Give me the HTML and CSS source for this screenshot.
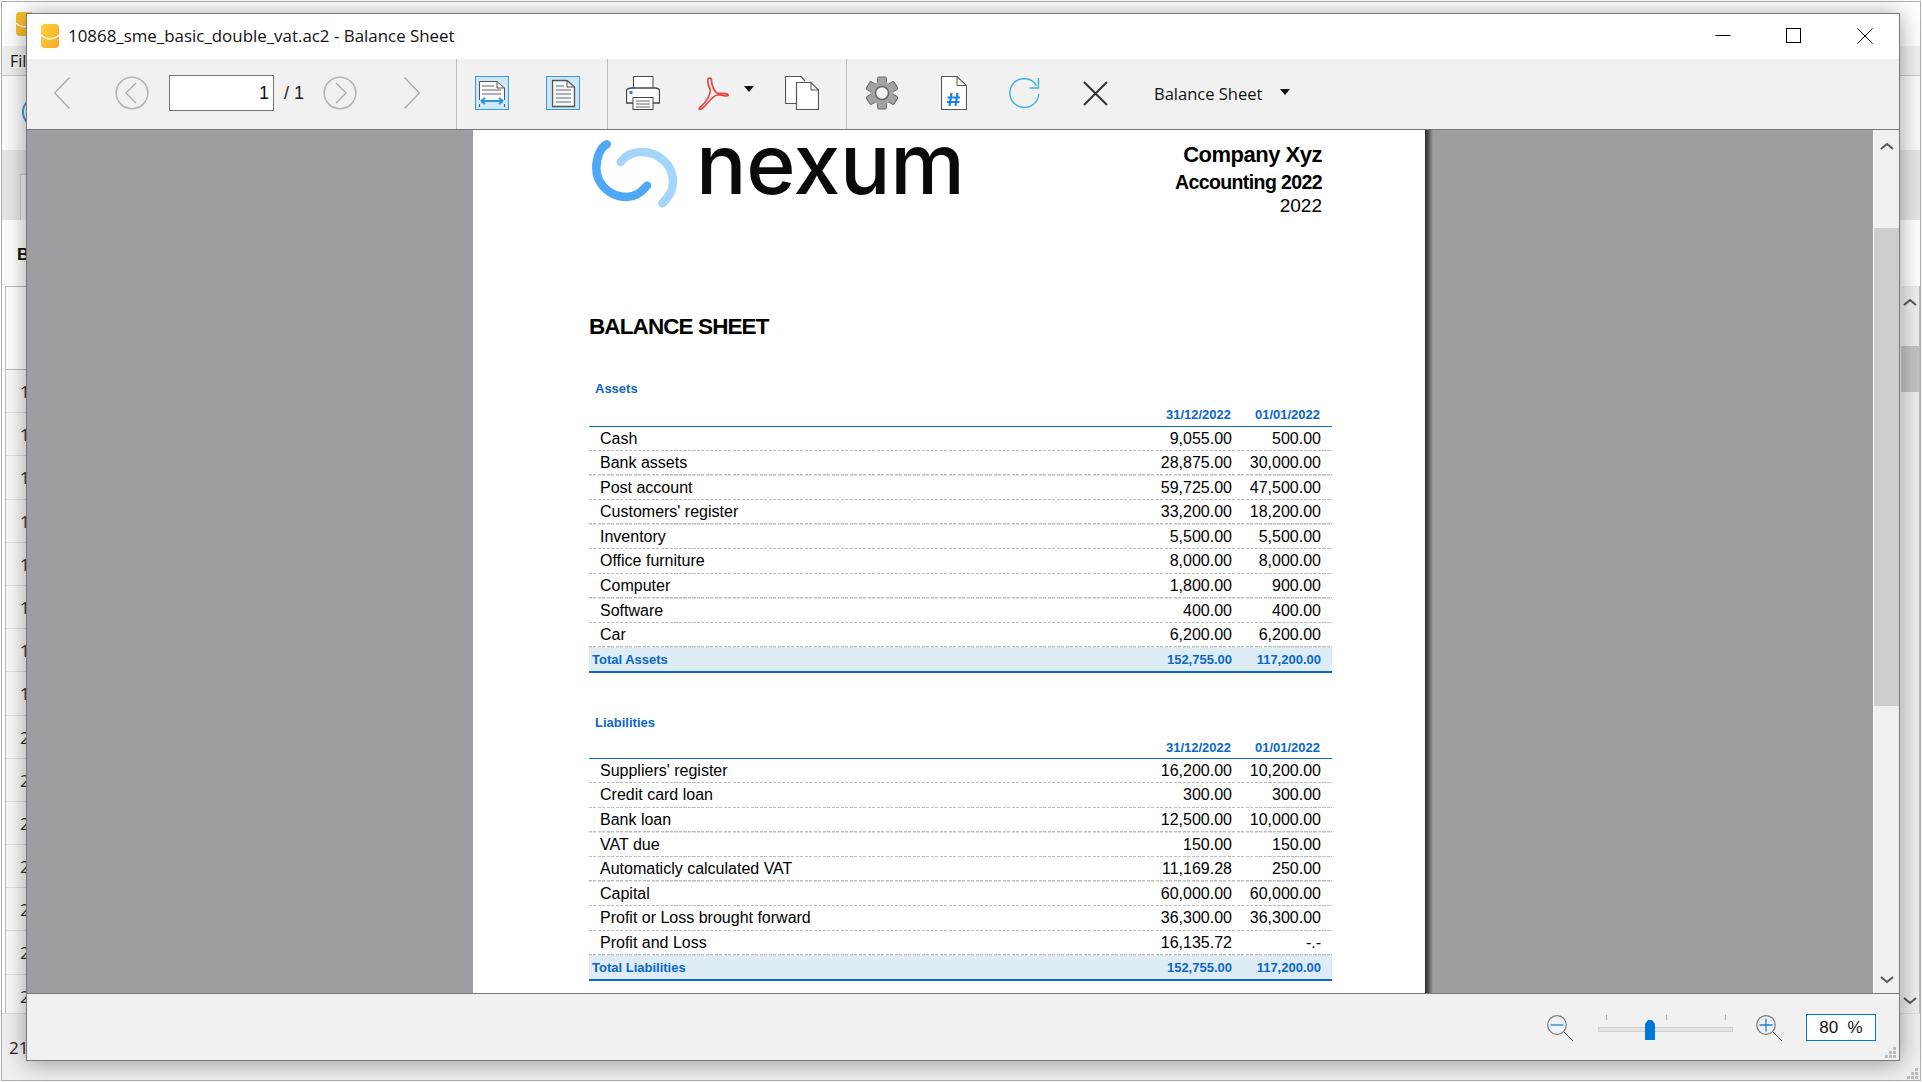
FILE: index.html
```html
<!DOCTYPE html>
<html lang="en">
<head>
<meta charset="utf-8">
<title>10868_sme_basic_double_vat.ac2 - Balance Sheet</title>
<link rel="stylesheet" href="styles.css">
</head>
<body>
<div class="desk">
  <div class="bg-title"><svg class="bg-appicon" width="18" height="24" viewBox="0 0 18 24"><rect width="18" height="24" rx="4" fill="#fbbf2d"/><path d="M0 11C5 16 13 16 18 11" stroke="#fff" stroke-width="1.5" fill="none"/></svg></div>
  <div class="bg-menu">File</div>
  <div class="bg-tools"><svg class="bg-toolicon" width="20" height="36" viewBox="0 0 20 36"><circle cx="18" cy="18" r="15" fill="none" stroke="#3b9fd8" stroke-width="2"/></svg></div>
  <div class="bg-tabs"><div class="bg-tab"></div></div>
  <div class="bg-heading">B</div>
  <div class="bg-main">
    <div class="bg-grid">
      <div class="bg-gridhead"></div>
      <div class="bg-row">1</div><div class="bg-row">1</div><div class="bg-row">1</div><div class="bg-row">1</div>
      <div class="bg-row">1</div><div class="bg-row">1</div><div class="bg-row">1</div><div class="bg-row">1</div>
      <div class="bg-row">2</div><div class="bg-row">2</div><div class="bg-row">2</div><div class="bg-row">2</div>
      <div class="bg-row">2</div><div class="bg-row">2</div><div class="bg-row">2</div>
    </div>
    <div class="bg-scroll">
      <svg class="chev" width="14" height="8" viewBox="0 0 14 8"><path d="M1 7L7 2L13 7" fill="none" stroke="#555" stroke-width="2"/></svg>
      <div class="bg-thumb"></div>
      <svg class="chev chev-end" width="14" height="8" viewBox="0 0 14 8"><path d="M1 1L7 6L13 1" fill="none" stroke="#555" stroke-width="2"/></svg>
    </div>
  </div>
  <div class="bg-status">21
    <svg class="bg-grip" width="11" height="11" viewBox="0 0 11 11"><path d="M8 0h3v3H8zM4 4h3v3H4zM8 4h3v3H8zM0 8h3v3H0zM4 8h3v3H4zM8 8h3v3H8z" fill="#bbb"/></svg>
  </div>
</div>

<section class="window">
  <header class="titlebar">
    <svg class="app-icon" width="18" height="24" viewBox="0 0 18 24"><defs><linearGradient id="appg" x1="0" y1="0" x2="1" y2="1"><stop offset="0" stop-color="#ffd23c"/><stop offset="1" stop-color="#f7a823"/></linearGradient></defs><rect width="18" height="24" rx="4" fill="url(#appg)"/><path d="M0 11C5 16 13 16 18 11" stroke="#fff" stroke-width="1.5" fill="none"/></svg>
    <span class="title-text">10868_sme_basic_double_vat.ac2 - Balance Sheet</span>
    <div class="controls">
      <svg class="ctl" width="16" height="16" viewBox="0 0 16 16"><path d="M0.5 7.5H15.5" stroke="#000" fill="none"/></svg>
      <svg class="ctl" width="16" height="16" viewBox="0 0 16 16"><rect x="0.5" y="0.5" width="14" height="14" fill="none" stroke="#000"/></svg>
      <svg class="ctl" width="16" height="16" viewBox="0 0 16 16"><path d="M0.5 0.5L15.5 15.5M15.5 0.5L0.5 15.5" stroke="#000" fill="none"/></svg>
    </div>
  </header>

  <nav class="toolbar">
    <div class="tgroup tg-nav">
      <svg class="i-prev" width="16" height="32" viewBox="0 0 16 32"><path d="M15.5 .5L.7 16L15.5 31.5" fill="none" stroke="#aaa" stroke-width="1.4"/></svg>
      <svg class="i-cprev" width="34" height="34" viewBox="0 0 34 34"><circle cx="17" cy="17" r="15.8" fill="none" stroke="#b4b4b4" stroke-width="1.6"/><path d="M21 7L11 17L21 27" fill="none" stroke="#aaa" stroke-width="1.3"/></svg>
      <div class="pageinput">1</div>
      <span class="pagetotal">/ 1</span>
      <svg class="i-cnext" width="34" height="34" viewBox="0 0 34 34"><circle cx="17" cy="17" r="15.8" fill="none" stroke="#b4b4b4" stroke-width="1.6"/><path d="M13 7L23 17L13 27" fill="none" stroke="#aaa" stroke-width="1.3"/></svg>
      <svg class="i-next" width="16" height="32" viewBox="0 0 16 32"><path d="M.5 .5L15.3 16L.5 31.5" fill="none" stroke="#aaa" stroke-width="1.4"/></svg>
    </div>
    <div class="tgroup tg-view">
      <div class="toggle">
        <svg width="32" height="32" viewBox="0 0 32 32"><path d="M3.500 23V4.500H21L28.500 11V23" fill="#f4f8fb" stroke="#555"/><path d="M21 4.500V11H28.500" fill="none" stroke="#555"/><path d="M6 9H18M6 13H25M6 17H25" stroke="#999" stroke-width="1.300"/><path d="M5 24H27M5 24L9 21M5 24L9 27M27 24L23 21M27 24L23 27" stroke="#2f94d8" stroke-width="1.800" fill="none"/><path d="M3.500 27V30M28.500 27V30" stroke="#555"/></svg>
      </div>
      <div class="toggle toggle-two">
        <svg width="32" height="32" viewBox="0 0 32 32"><path d="M5.500 3.500H20L27.500 10V29.500H5.500Z" fill="#f4f8fb" stroke="#555" stroke-width="1.300"/><path d="M20 3.500V10H27.500" fill="none" stroke="#555"/><path d="M9 9H17M9 13H24M9 17H24M9 21H24M9 25H24" stroke="#999" stroke-width="1.300"/></svg>
      </div>
    </div>
    <div class="tgroup tg-out">
      <svg class="i-print" width="34" height="34" viewBox="0 0 34 34"><path d="M7.500 12V.5H27V12" fill="#fff" stroke="#444"/><path d="M6 12H29Q33.500 12 33.500 15V27H.5V15Q.5 12 6 12Z" fill="#fff" stroke="#444" stroke-width="1.300"/><rect x="3.500" y="15" width="3" height="3" fill="#2a86d8"/><rect x="7" y="21.500" width="20" height="12" fill="#fff" stroke="#444"/><path d="M10 25H24M10 28H24M10 31H24" stroke="#999" stroke-width="1.300"/></svg>
      <svg class="i-pdf" width="31" height="33" viewBox="0 0 31 33"><path d="M11.500 1.200C9 1.500 9.500 7 12 12C13.500 16 8 26 3 29.500C-.5 32 1.500 33 4 31.500C8 29 13 20 18.500 18.300C23 17 29 20 30 18.500C31 16.500 25 16.200 20 16.300C16 15.500 13.500 7 13.500 3.500C13.500 1.800 12.700 1 11.500 1.200Z" fill="none" stroke="#ea4444" stroke-width="1.700"/></svg>
      <svg class="i-caret" width="10" height="6" viewBox="0 0 10 6"><path d="M0 0H10L5 6Z" fill="#111"/></svg>
      <svg class="i-copy" width="34" height="34" viewBox="0 0 34 34"><path d="M11 27.500H.5V.5H16L20 5" fill="#fff" stroke="#555" stroke-width="1.200"/><path d="M11.500 6.500H26L33.500 14V33.500H11.500Z" fill="#fff" stroke="#555" stroke-width="1.200"/><path d="M26 6.500V14H33.500" fill="none" stroke="#555"/></svg>
    </div>
    <div class="tgroup tg-misc">
      <svg class="i-gear" width="34" height="34" viewBox="0 0 34 34"><g fill="#a3a3a3" stroke="#666"><rect x="12.500" y="1" width="9" height="32" rx="1.500"/><rect x="12.500" y="1" width="9" height="32" rx="1.500" transform="rotate(60 17 17)"/><rect x="12.500" y="1" width="9" height="32" rx="1.500" transform="rotate(120 17 17)"/></g><circle cx="17" cy="17" r="11.500" fill="#a3a3a3"/><circle cx="17" cy="17" r="6.500" fill="#f2f2f2" stroke="#666" stroke-width="1.500"/></svg>
      <svg class="i-hash" width="26" height="34" viewBox="0 0 26 34"><path d="M.5 .5H16L25.500 9.500V33.500H.5Z" fill="#fff" stroke="#555" stroke-width="1.100"/><path d="M16 .5V9.500H25.500" fill="none" stroke="#555"/><path d="M10.500 17L8.500 30M16.500 17L14.500 30M6.500 21.500H19M6 26H18.500" stroke="#2284d4" stroke-width="2.200" fill="none"/></svg>
      <svg class="i-refresh" width="31" height="32" viewBox="0 0 31 32"><path d="M15 1.500A14.500 14.500 0 1 0 29.800 17M15 1.500C20 1.500 24.500 4 27.500 8.500" fill="none" stroke="#3fb9d6" stroke-width="1.500"/><path d="M29.500 1V11H20.500" fill="none" stroke="#3fb9d6" stroke-width="1.500"/></svg>
      <svg class="i-close" width="25" height="25" viewBox="0 0 25 25"><path d="M1 1L24 24M24 1L1 24" stroke="#333" stroke-width="2" fill="none"/></svg>
      <span class="view-name">Balance Sheet</span>
      <svg class="i-caret2" width="10" height="6" viewBox="0 0 10 6"><path d="M0 0H10L5 6Z" fill="#111"/></svg>
    </div>
  </nav>

  <div class="viewer">
    <div class="canvas">
      <article class="page">
        <div class="doc-head">
          <div class="brand">
            <svg class="brand-mark" width="92" height="80" viewBox="0 0 92 80"><path d="M17.700 9.300C11 13 7.300 23 7.300 33C7.300 50 22 62 37.700 62C46 62 53 57 58 50.700" fill="none" stroke="#4ea8f6" stroke-width="8.500" stroke-linecap="round"/><path d="M31.700 27C37 20 45 17 52.700 17C70 17 84 30 84 46.700C84 55 80 62 73.300 68.300" fill="none" stroke="#a4d5fd" stroke-width="8.500" stroke-linecap="round"/></svg>
            <span class="brand-name">nexum</span>
          </div>
          <div class="company">
            <div class="co-name">Company Xyz</div>
            <div class="co-sub">Accounting 2022</div>
            <div class="co-year">2022</div>
          </div>
        </div>
        <h1 class="doc-title">BALANCE SHEET</h1>

        <h2 class="sec-label">Assets</h2>
        <div class="row row-dates row-dates-first"><span></span><span>31/12/2022</span><span>01/01/2022</span></div>
        <div class="row"><span>Cash</span><span>9,055.00</span><span>500.00</span></div>
        <div class="row"><span>Bank assets</span><span>28,875.00</span><span>30,000.00</span></div>
        <div class="row"><span>Post account</span><span>59,725.00</span><span>47,500.00</span></div>
        <div class="row"><span>Customers' register</span><span>33,200.00</span><span>18,200.00</span></div>
        <div class="row"><span>Inventory</span><span>5,500.00</span><span>5,500.00</span></div>
        <div class="row"><span>Office furniture</span><span>8,000.00</span><span>8,000.00</span></div>
        <div class="row"><span>Computer</span><span>1,800.00</span><span>900.00</span></div>
        <div class="row"><span>Software</span><span>400.00</span><span>400.00</span></div>
        <div class="row"><span>Car</span><span>6,200.00</span><span>6,200.00</span></div>
        <div class="row row-total"><span>Total Assets</span><span>152,755.00</span><span>117,200.00</span></div>

        <h2 class="sec-label sec-second">Liabilities</h2>
        <div class="row row-dates"><span></span><span>31/12/2022</span><span>01/01/2022</span></div>
        <div class="row"><span>Suppliers' register</span><span>16,200.00</span><span>10,200.00</span></div>
        <div class="row"><span>Credit card loan</span><span>300.00</span><span>300.00</span></div>
        <div class="row"><span>Bank loan</span><span>12,500.00</span><span>10,000.00</span></div>
        <div class="row"><span>VAT due</span><span>150.00</span><span>150.00</span></div>
        <div class="row"><span>Automaticly calculated VAT</span><span>11,169.28</span><span>250.00</span></div>
        <div class="row"><span>Capital</span><span>60,000.00</span><span>60,000.00</span></div>
        <div class="row"><span>Profit or Loss brought forward</span><span>36,300.00</span><span>36,300.00</span></div>
        <div class="row"><span>Profit and Loss</span><span>16,135.72</span><span>-.-</span></div>
        <div class="row row-total"><span>Total Liabilities</span><span>152,755.00</span><span>117,200.00</span></div>
      </article>
      <div class="page-shadow"></div>
    </div>
    <div class="vscroll">
      <svg class="chev chev-top" width="14" height="8" viewBox="0 0 14 8"><path d="M1 7L7 2L13 7" fill="none" stroke="#555" stroke-width="2"/></svg>
      <div class="vthumb"></div>
      <svg class="chev chev-bot" width="14" height="8" viewBox="0 0 14 8"><path d="M1 1L7 6L13 1" fill="none" stroke="#555" stroke-width="2"/></svg>
    </div>
  </div>

  <footer class="statusbar">
    <svg class="zoom-btn" width="28" height="28" viewBox="0 0 28 28"><circle cx="10" cy="10" r="9.300" fill="none" stroke="#777" stroke-width="1.200"/><path d="M17 17L26 26" stroke="#555"/><path d="M3.500 10H16.500" stroke="#1d83d6" stroke-width="1.300"/></svg>
    <div class="slider">
      <i class="tick t1"></i><i class="tick t2"></i><i class="tick t3"></i>
      <div class="track"></div>
      <svg class="thumb" width="10" height="20" viewBox="0 0 10 20"><path d="M0 4L3 0H7L10 4V20H0Z" fill="#0078d7"/></svg>
    </div>
    <svg class="zoom-btn zoom-in" width="28" height="28" viewBox="0 0 28 28"><circle cx="10" cy="10" r="9.300" fill="none" stroke="#777" stroke-width="1.200"/><path d="M17 17L26 26" stroke="#555"/><path d="M3.500 10H16.500M10 3.500V16.500" stroke="#1d83d6" stroke-width="1.300"/></svg>
    <div class="zoom-box">80&nbsp;&nbsp;%</div>
    <svg class="grip" width="11" height="11" viewBox="0 0 11 11"><path d="M8 0h3v3H8zM4 4h3v3H4zM8 4h3v3H8zM0 8h3v3H0zM4 8h3v3H4zM8 8h3v3H8z" fill="#bbb"/></svg>
  </footer>
</section>
</body>
</html>
```
FILE: styles.css
```css
* { box-sizing: border-box; }
html, body { margin: 0; padding: 0; background: #fff; }
body { width: 1922px; height: 1082px; overflow: hidden; position: relative; font-family: "Open Sans", "Liberation Sans", sans-serif; }
svg { display: block; flex: none; }

/* window behind */
.desk { margin: 1px 1px 0 1px; width: 1920px; height: 1080px; border: 1px solid #adadad; display: flex; flex-direction: column; background: #fff; }
.bg-title { height: 44px; background: #fff; padding: 10px 0 0 14px; }
.bg-menu { height: 30px; background: #f0f0f0; border-bottom: 1px solid #c8c8c8; padding-left: 8px; font-size: 16px; line-height: 30px; color: #111; }
.bg-tools { height: 74px; background: #fafafa; padding: 18px 0 0 18px; }
.bg-tabs { height: 70px; background: #e6e6e6; padding: 24px 0 0 18px; }
.bg-tab { width: 60px; height: 46px; background: #f3f3f3; border: 1px solid #ccc; border-bottom: 0; }
.bg-heading { height: 66px; padding: 24px 0 0 15px; font: bold 17px/22px "Liberation Sans", sans-serif; color: #111; }
.bg-main { flex: 1; display: flex; justify-content: space-between; min-height: 0; overflow: hidden; }
.bg-grid { width: 200px; margin-left: 3px; border-left: 1px solid #bbb; border-top: 1px solid #bbb; }
.bg-gridhead { height: 83px; border-bottom: 1px solid #bbb; }
.bg-row { height: 43.2px; border-bottom: 1px solid #ddd; padding: 3px 0 0 14px; font-size: 17px; line-height: 38px; color: #333; background: #fafafa; overflow: hidden; }
.bg-scroll { width: 19px; background: #eee; display: flex; flex-direction: column; align-items: center; padding: 12px 0 8px; border-right: 1px solid #bbb; }
.bg-thumb { width: 100%; height: 46px; margin-top: 40px; background: #c4c4c4; }
.chev-end { margin-top: auto; }
.bg-status { height: 67px; flex: none; background: #f0f0f0; border-top: 1px solid #ddd; padding: 22px 0 0 7px; font-size: 17px; line-height: 24px; color: #222; display: flex; justify-content: space-between; }
.bg-grip { margin: 32px 2px 0 0; }

/* viewer window */
.window { position: absolute; left: 26px; top: 13px; width: 1874px; height: 1048px; border: 1px solid #777; background: #fff; display: flex; flex-direction: column; box-shadow: 0 2px 22px rgba(0,0,0,.38); }
.titlebar { height: 45px; flex: none; background: #fff; display: flex; align-items: center; padding: 0 0 2px 14px; color: #111; }
.app-icon { margin-top: 1px; }
.title-text { margin-left: 9px; font-size: 16.9px; }
.controls { margin-left: auto; display: flex; gap: 55px; padding-right: 26px; }

.toolbar { height: 71px; flex: none; background: #f1f1f1; border-bottom: 1px solid #777; display: flex; align-items: stretch; }
.tgroup { display: flex; align-items: center; padding-bottom: 2px; border-right: 1px solid #c0c0c0; }
.tg-nav { width: 430px; }
.tg-view { width: 151px; }
.tg-out { width: 239px; }
.tg-misc { border-right: 0; flex: 1; }
.i-prev { margin-left: 27px; }
.i-cprev { margin-left: 45px; }
.pageinput { margin-left: 20px; width: 105px; height: 36px; background: #fff; border: 1px solid #777; text-align: right; padding-right: 4px; font: 18px/35px "Liberation Sans", sans-serif; color: #111; }
.pagetotal { margin-left: 10px; width: 39px; font: 18px "Liberation Sans", sans-serif; color: #222; }
.i-cnext { margin-left: 0; }
.i-next { margin-left: 47px; }
.toggle { width: 34px; height: 34px; margin-left: 18px; background: #cfe6f7; border: 1px solid #3a9bdc; display: flex; align-items: center; justify-content: center; }
.toggle-two { margin-left: 37px; }
.i-print { margin-left: 18px; }
.i-pdf { margin-left: 38px; }
.i-caret { margin: -9px 0 0 15px; }
.i-copy { margin-left: 31px; }
.i-gear { margin-left: 18px; }
.i-hash { margin-left: 42px; }
.i-refresh { margin-left: 42px; }
.i-close { margin-left: 43px; }
.view-name { margin-left: 46px; font-size: 16.5px; color: #111; }
.i-caret2 { margin: -3px 0 0 18px; }

.viewer { flex: 1; min-height: 0; display: flex; background: #9e9da2; }
.canvas { flex: 1; min-width: 0; display: flex; padding-left: 446px; }
.page { width: 952px; flex: none; background: #fff; padding-left: 116px; font-family: "Liberation Sans", Arial, sans-serif; color: #000; }
.page-shadow { width: 8px; flex: none; background: linear-gradient(90deg, #2a2a2a, #55555a 45%, #9e9da2); }
.vscroll { width: 26px; flex: none; background: #f0f0f0; border-left: 1px solid #fff; display: flex; flex-direction: column; align-items: center; padding: 12px 0 9px; position: relative; }
.vthumb { width: 100%; height: 478px; margin-top: 78px; background: #cdcdcd; }
.chev-bot { margin-top: auto; }

/* document */
.doc-head { height: 120px; width: 733px; display: flex; justify-content: space-between; }
.brand { display: flex; align-items: flex-start; }
.brand-mark { margin: 5px 0 0 0; }
.brand-name { margin: 4px 0 0 15px; font: 500 84px/60px Inter, sans-serif; color: #0a0a0a; letter-spacing: -.3px; }
.company { text-align: right; padding-top: 11px; }
.co-name { font-weight: bold; font-size: 22px; line-height: 28px; letter-spacing: -.5px; }
.co-sub { font-weight: bold; font-size: 19.5px; line-height: 26px; letter-spacing: -.6px; }
.co-year { font-size: 19px; line-height: 21px; }
.doc-title { margin: 62px 0 0; font-size: 22.5px; line-height: 30px; font-weight: bold; letter-spacing: -.9px; }
.sec-label { margin: 37px 0 0 6px; font-size: 13px; line-height: 20px; font-weight: bold; color: #0a66cc; }
.sec-second { margin-top: 40px; }
.row { width: 743px; height: 24.6px; display: grid; grid-template-columns: 1fr 89px 89px; padding: 0 11px; font-size: 16px; line-height: 23px; white-space: nowrap;
  background: repeating-linear-gradient(90deg, #bbb 0 3px, transparent 3px 4.5px) bottom / 100% 1.5px no-repeat; }
.row span:not(:first-child) { text-align: right; }
.row-dates { height: 26px; padding-right: 12px; font-size: 13px; font-weight: bold; color: #0a66cc; line-height: 30px; background: none; border-bottom: 1.5px solid #0a66cc; }
.row-dates-first { height: 27.5px; line-height: 31px; }
.row-total { height: 25px; padding: 0 11px 0 3px; font-size: 13px; font-weight: bold; color: #0a66cc; background: #deedf5; border-bottom: 2px solid #0a66cc; line-height: 23px; }

/* status bar */
.statusbar { height: 67px; flex: none; background: #f1f1f1; border-top: 1px solid #777; display: flex; position: relative; padding-left: 1520px; }
.zoom-btn { margin-top: 21px; }
.slider { width: 137px; height: 32px; margin: 14px 0 0 23px; position: relative; }
.track { position: absolute; left: 0; right: 2px; top: 19px; height: 5px; background: #e4e4e4; border: 1px solid #cfcfcf; }
.thumb { position: absolute; left: 47px; top: 12px; }
.tick { position: absolute; top: 7px; width: 1px; height: 5px; background: #a8a8a0; }
.t1 { left: 8px; }
.t2 { left: 68px; }
.t3 { left: 127px; }
.zoom-in { margin-left: 21px; }
.zoom-box { margin: 20px 0 0 22px; width: 70px; height: 27px; background: #fff; border: 1px solid #0078d7; text-align: center; font: 17px/26px "Liberation Sans", sans-serif; color: #111; }
.grip { position: absolute; right: 3px; bottom: 2px; }
```
